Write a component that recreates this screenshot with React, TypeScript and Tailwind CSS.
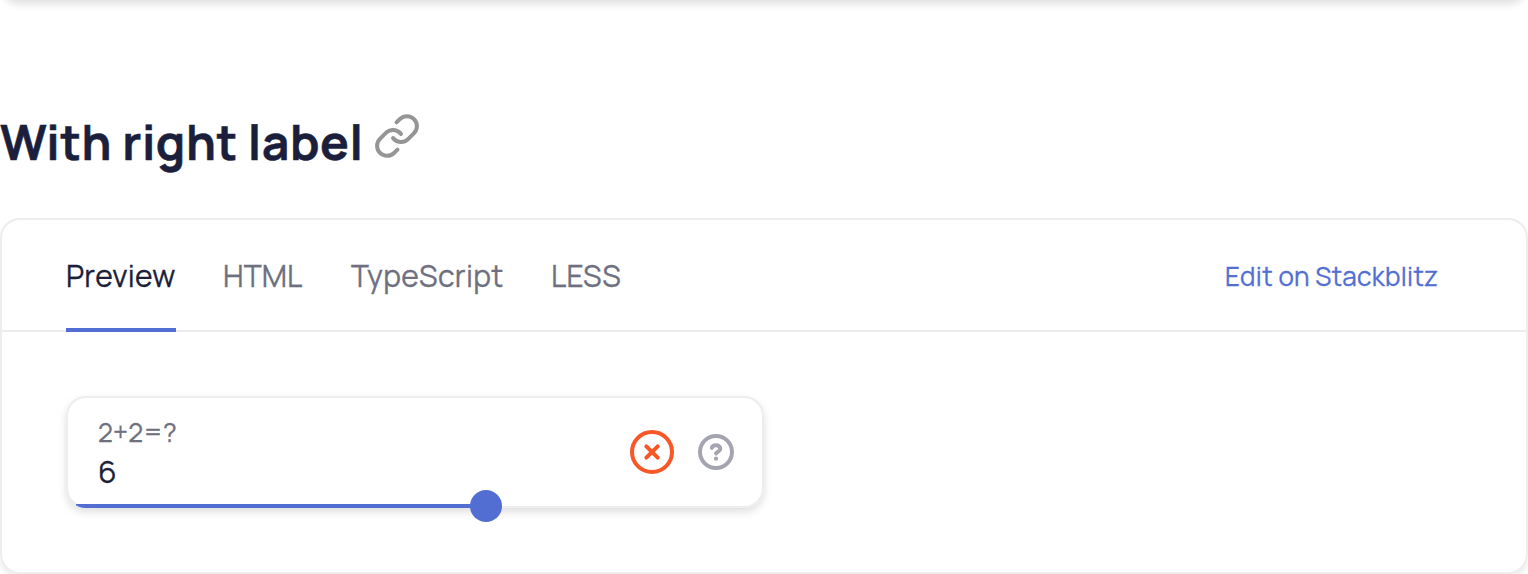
import { Link } from "lucide-react";

const tabs = [
  { name: "Preview", style: "w-[110px] border-[#526ed3] text-[#1b1f3b] tracking-[0.25px]" },
  { name: "HTML", style: "-ml-px w-[80px] border-transparent text-[#6e7080] tracking-[0.1px]" },
  { name: "TypeScript", style: "w-[152px] border-transparent text-[#6e7080] tracking-[0.3px]" },
  { name: "LESS", style: "w-[71px] border-transparent text-[#6e7080] tracking-[0.2px]" },
];

function Slider() {
  return (
    <div className="relative h-[112px] w-[698px] rounded-[20px] shadow-[0_4px_8px_rgba(0,0,0,0.13)]">
      <div className="flex h-full items-center overflow-hidden rounded-[20px] border-2 border-[#ededed] pr-7 pl-[30px]">
        <div className="flex flex-1 flex-col pt-[3px]">
          <span className="h-[36px] text-[26px] leading-[36px] tracking-[0.2px] whitespace-nowrap text-[#6e7080]">2+2=?</span>
          <span className="h-[44px] text-[30px] leading-[44px] text-[#1b1f3b]">6</span>
        </div>
        <svg className="mr-6 size-11" viewBox="0 0 44 44" fill="none" stroke="#f95727" strokeWidth="4" strokeLinecap="round">
          <circle cx="22" cy="22" r="20" />
          <path d="m16.3 16.3 11.4 11.4m0-11.4L16.3 27.7" />
        </svg>
        <svg className="size-9" viewBox="0 0 36 36" fill="none" stroke="#a4a5b1" strokeWidth="4" strokeLinecap="round" strokeLinejoin="round">
          <circle cx="18" cy="18" r="16" />
          <path d="M13.8 13.9C14.3 12.2 15.9 11.2 18 11.2c2.5 0 4.3 1.4 4.3 3.6 0 2.6-3.3 2.8-4.2 4.6" />
          <circle cx="18" cy="24.7" r="2.1" fill="#a4a5b1" stroke="none" />
        </svg>
      </div>
      <div className="absolute inset-0 overflow-hidden rounded-[20px]">
        <div className="absolute bottom-0 left-[10px] h-1 w-[410px] bg-[#526ed3]" />
      </div>
      <div className="absolute top-[94px] left-[404px] size-8 rounded-full bg-[#526ed3]" />
    </div>
  );
}

export default function App() {
  return (
    <main className="h-[574px] w-[1528px] overflow-hidden bg-white font-['Manrope','Inter',sans-serif] [-webkit-text-stroke:0.3px]">
      <div className="-mt-12 h-12 rounded-[20px] shadow-[0_4px_8px_rgba(0,0,0,0.13)]" />
      <div className="flex h-[218px] items-start pt-[110px]">
        <h2 className="w-[373px] text-[48px] leading-[64px] font-bold tracking-[0.5px] whitespace-nowrap text-[#1b1f3b] [-webkit-text-stroke:0.5px]">With right label</h2>
        <Link className="mt-0.5 size-12 shrink-0 text-[#959595]" strokeWidth={2} />
      </div>
      <section className="h-[356px] rounded-[20px] border-2 border-[#ededed] shadow-[0_4px_6px_rgba(0,0,0,0.08)]">
        <header className="flex h-[112px] justify-between border-b-2 border-[#ededed] pr-[88px] pl-16">
          <nav className="flex h-[112px] gap-12">
            {tabs.map((tab) => (
              <button key={tab.name} className={`h-[112px] border-b-4 text-left text-[30px] leading-[112px] whitespace-nowrap ${tab.style}`}>
                {tab.name}
              </button>
            ))}
          </nav>
          <a className="w-[213px] text-[26px] leading-[112px] tracking-[0.3px] whitespace-nowrap text-[#526ed3]">Edit on Stackblitz</a>
        </header>
        <div className="px-16 pt-16">
          <Slider />
        </div>
      </section>
    </main>
  );
}
